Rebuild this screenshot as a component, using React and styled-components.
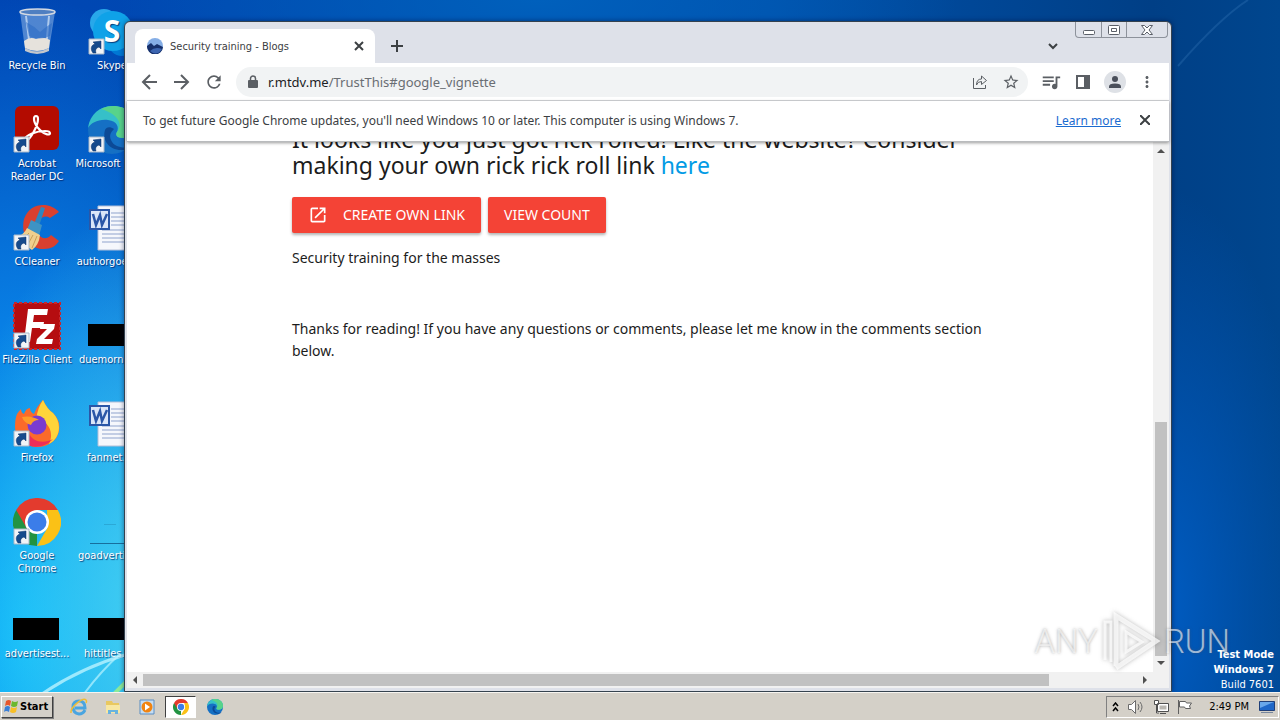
import React from "react";
import styled, { createGlobalStyle } from "styled-components";
import {
  MdStarOutline,
  MdRefresh,
  MdQueueMusic,
  MdMoreVert,
  MdOpenInNew
} from "react-icons/md";

const ui = `"Noto Sans", "Open Sans", sans-serif`;
const small = `"DejaVu Sans Condensed", "DejaVu Sans", sans-serif`;

const GlobalStyle = createGlobalStyle`
  * {
    box-sizing: border-box;
  }

  body {
    margin: 0;
    font-family: ${ui};
    overflow: hidden;
  }

  button {
    margin: 0;
    padding: 0;
    border: 0;
    background: none;
    font: inherit;
    color: inherit;
  }

  svg {
    display: block;
    flex: none;
  }
`;

const Screen = styled.div`
  display: flex;
  flex-direction: column;
  height: 100vh;
`;

const Desktop = styled.main`
  flex: 1;
  min-height: 0;
  position: relative;
  overflow: hidden;

  background: radial-gradient(
      ellipse 240px 420px at 14% 88%,
      rgba(84, 226, 244, 0.9),
      rgba(40, 200, 245, 0) 100%
    ),
    radial-gradient(
      ellipse 330px 640px at 2% 92%,
      #06b4fb 0%,
      rgba(10, 140, 240, 0.8) 50%,
      rgba(0, 80, 200, 0) 100%
    ),
    radial-gradient(
      ellipse 420px 120px at 42% 0%,
      #0060bc,
      rgba(0, 80, 180, 0) 100%
    ),
    radial-gradient(
      ellipse 150px 420px at 91% 88%,
      #005cc2,
      rgba(0, 80, 170, 0) 100%
    ),
    linear-gradient(90deg, #0046b4 0%, #0050aa 60%, #003f86 90%, #00468e 100%);
`;

const Rays = styled.svg`
  position: absolute;
  left: 0;
  bottom: 0;
`;

const CornerRay = styled.svg`
  position: absolute;
  top: 0;
  right: 0;
`;

const IconGrid = styled.div`
  display: grid;
  grid-template-columns: 74px 74px;
  grid-auto-rows: 98px;
  column-gap: 1px;
  padding-top: 8px;
`;

const Shortcut = styled.button`
  display: flex;
  flex-direction: column;
  align-items: center;
  gap: 3px;

  color: #fff;
  font-family: ${small};
  font-size: 11px;
  line-height: 13px;
  text-shadow: 1px 1px 1px rgba(0, 20, 80, 0.7);
  white-space: pre;
`;

const BrowserWindow = styled.section`
  display: flex;
  flex-direction: column;

  position: absolute;
  top: 21px;
  right: 108px;
  bottom: 0;
  left: 124px;

  padding: 0 2px 3px;
  border: 1px solid #35424f;
  border-radius: 6px 6px 0 0;
  background: #dee1e9;
  box-shadow: 0 0 5px rgba(0, 10, 50, 0.5);
`;

const TitleBar = styled.div`
  display: flex;
  align-items: flex-end;
  height: 41px;
  padding-left: 8px;
  color: #3c4043;
`;

const Tab = styled.div`
  display: flex;
  align-items: center;
  gap: 7px;
  width: 240px;
  height: 34px;
  padding: 0 11px 0 12px;

  border-radius: 8px 8px 0 0;
  background: #fff;
  font-family: ${small};
  font-size: 11px;
`;

const Title = styled.span`
  flex: 1;
`;

const NewTab = styled.button`
  height: 34px;
  padding: 0 16px;
`;

const TabSearch = styled.button`
  height: 34px;
  margin: 0 17px 0 auto;
`;

const Caption = styled.div`
  display: flex;
  align-self: flex-start;
  height: 16px;
  margin-right: 1px;
  border: 1px solid #8d929b;
  border-top: 0;
  border-radius: 0 0 4px 4px;
`;

const CaptionButton = styled.button`
  display: flex;
  align-items: center;
  justify-content: center;
  width: ${p => (p.$wide ? 41 : 25)}px;

  & + & {
    border-left: 1px solid #8d929b;
  }
`;

const Toolbar = styled.div`
  display: flex;
  align-items: center;
  gap: 12px;
  height: 38px;
  padding: 0 13px;
  background: #fff;
  border-bottom: 1px solid #d5d7da;
  color: #5b5f64;
`;

const Navigation = styled.nav`
  display: flex;
  gap: 12px;
`;

const AddressBar = styled.div`
  display: flex;
  align-items: center;
  flex: 1;
  gap: 14px;
  height: 30px;
  padding: 0 8px 0 12px;
  border-radius: 15px;
  background: #f1f3f4;
`;

const Address = styled.div`
  display: flex;
  flex: 1;
  margin-left: -4px;
  font-size: 13px;
  color: #6a6e73;
`;

const Host = styled.span`
  color: #202124;
`;

const Avatar = styled.button`
  display: flex;
  align-items: center;
  justify-content: center;
  width: 22px;
  height: 22px;
  border-radius: 11px;
  background: #dee1e6;
  color: #4a4f5a;
`;

const InfoBar = styled.div`
  display: flex;
  align-items: center;
  gap: 19px;
  height: 41px;
  padding: 0 19px 2px 16px;
  background: #fff;
  border-bottom: 1px solid #b9bbbd;
  box-shadow: 0 1px 3px rgba(0, 0, 0, 0.4);
  color: #3c4043;
  font-size: 12px;
  z-index: 1;
`;

const InfoText = styled.span`
  flex: 1;
`;

const InfoLink = styled.a`
  color: #1a6bd0;
`;

const Viewport = styled.div`
  display: grid;
  grid-template-columns: minmax(0, 1fr) 16px;
  grid-template-rows: minmax(0, 1fr) 16px;
  flex: 1;
  min-height: 0;
  background: #f1f1f1;
`;

const Page = styled.article`
  padding: 0 165px;
  overflow: hidden;
  background: #fff;
  color: #1c1c1c;
  font-size: 14px;
  line-height: 22px;
`;

const Heading = styled.h1`
  margin: -16px 0 19px;
  font-size: 23px;
  font-weight: 400;
  line-height: 26px;
`;

const PageLink = styled.a`
  color: #039be5;
  text-decoration: none;
`;

const Actions = styled.div`
  display: flex;
  gap: 7px;
  margin-bottom: 14px;
`;

const ActionButton = styled.button`
  display: flex;
  align-items: center;
  gap: 15px;
  height: 36px;
  padding: 0 16px;
  border-radius: 2px;
  background: #f44336;
  box-shadow: 0 2px 3px rgba(0, 0, 0, 0.3);
  color: #fff;
  font-size: 14px;
`;

const Paragraph = styled.p`
  margin: 0 0 49px;
`;

const Scrollbar = styled.div`
  display: flex;
  flex-direction: ${p => (p.$vertical ? "column" : "row")};
  align-items: center;
  justify-content: space-between;
  padding: ${p => (p.$vertical ? "5px 0" : "0 4px")};
`;

const Thumb = styled.div`
  flex: none;
  width: ${p => (p.$vertical ? "12px" : "89%")};
  height: ${p => (p.$vertical ? "45%" : "12px")};
  margin: ${p => (p.$vertical ? "auto 0 3px" : "0 auto 0 4px")};
  background: #c1c1c1;
`;

const BuildInfo = styled.div`
  position: absolute;
  right: 6px;
  bottom: 0;

  color: #fff;
  font-family: ${small};
  font-size: 11px;
  line-height: 15px;
  text-align: right;
`;

const Watermark = styled.div`
  display: flex;
  align-items: center;
  gap: 3px;

  position: absolute;
  right: 50px;
  bottom: 18px;

  color: rgba(255, 255, 255, 0.6);
  font-family: Roboto, sans-serif;
  font-size: 33px;
  font-weight: 300;
  line-height: 64px;
  text-shadow: 0 0 3px rgba(80, 80, 80, 0.5);

  svg {
    filter: drop-shadow(0 0 2px rgba(80, 80, 80, 0.5));
  }
`;

const Taskbar = styled.footer`
  display: flex;
  align-items: center;
  gap: 3px;
  height: 28px;
  padding: 2px 1px;
  border-top: 1px solid #f6f4f0;
  background: #d4d0c8;
  font-family: ${small};
  font-size: 11px;
`;

const StartButton = styled.button`
  display: flex;
  align-items: center;
  gap: 1px;
  height: 22px;
  width: 52px;
  padding-left: 2px;
  margin-right: 7px;
  border: 1px solid;
  border-color: #fff #404040 #404040 #fff;
  box-shadow: 1px 1px 0 #808080;
  font-weight: 700;
`;

const TaskButton = styled.button`
  display: flex;
  align-items: center;
  justify-content: center;
  width: 31px;
  height: 22px;
  border: ${p => (p.$active ? "1px solid" : "0")};
  border-color: #404040 #fff #fff #404040;
  background: ${p => (p.$active ? "#fff" : "none")};
`;

const Tray = styled.div`
  display: flex;
  align-items: center;
  gap: 8px;
  height: 22px;
  margin-left: auto;
  padding: 0 3px 0 5px;
  border: 1px solid;
  border-color: #808080 #fff #fff #808080;
`;

const Clock = styled.time`
  margin: 0 2px 0 8px;
`;

const Arrow = () => (
  <g>
    <path d="M1 31h15v15H1z" fill="#f2f4f7" stroke="#a9b8c9" />
    <path
      d="M5 45c-3-4-2-8 2-9l-2-2 8-1v8l-2-2c-3 1-4 3-3 6z"
      fill="#164a8c"
      stroke="#0f376e"
      strokeWidth=".5"
    />
  </g>
);

const ChromeShape = () => (
  <g>
    <path d="M24 24v24A24 24 0 0 1 3.200 12z" fill="#229342" />
    <path d="M3.200 12 13.600 30 24 24V12h20.800A24 24 0 0 0 3.200 12z" fill="#e33b2e" />
    <path d="M24 48 34.400 30 34 12h10.800A24 24 0 0 1 24 48z" fill="#fbc116" />
    <circle cx="24" cy="24" r="12" fill="#fff" />
    <circle cx="24" cy="24" r="9.500" fill="#3b7de9" />
  </g>
);

const EdgeShape = () => (
  <g>
    <circle cx="24" cy="24" r="24" fill="#1570c4" />
    <path
      d="M0 22C2 8 12 0 25 0c14 0 23 9 23 20 0 8-6 12-13 12-6 0-8-3-6-6 2-4 1-11-9-12C10 13 3 17 0 22z"
      fill="#36c0c8"
    />
    <path
      d="M25 0c14 0 23 9 23 20 0 8-6 12-13 12-6 0-8-3-6-6 6-7 2-18-16-23 4-2 8-3 12-3z"
      fill="#58d38a"
    />
    <path
      d="M17 24c-3 10 4 21 18 20 4 0 7-2 9-4-6 3-18 2-21-6-2-5 0-8 3-11-4-3-8-2-9 1z"
      fill="#0c4a96"
    />
  </g>
);

const Bin = () => (
  <g>
    <path d="M7 4 12 41q12 6 24 0L42 4z" fill="#8fb6e6" fillOpacity=".55" />
    <path d="M13 8l4 32M36 8l-3 32" stroke="#d8e8fa" strokeOpacity=".7" strokeWidth="2" />
    <path d="M11 33q6-5 12-2 7-3 14 1l-1 8q-12 6-24 0z" fill="#e6e2dc" />
    <path d="M13 14q8 4 14 10 7-6 12-9l-2 13q-11 5-21 0z" fill="#2d6dc4" fillOpacity=".6" />
    <ellipse cx="24.500" cy="4" rx="17.500" ry="3" fill="#4f7fc1" stroke="#d3d9e2" strokeWidth="1.500" />
    <path d="M12 40q12 7 24 0v3q-12 6-24 0z" fill="#c4c7cc" />
  </g>
);

const Skype = () => (
  <g>
    <circle cx="16" cy="15" r="14" fill="#28a8ea" />
    <circle cx="34" cy="34" r="14" fill="#0078d4" />
    <circle cx="25" cy="23" r="20" fill="#0fa2e8" />
    <text
      x="24"
      y="34"
      fill="#fff"
      fontFamily="Open Sans"
      fontSize="30"
      fontWeight="700"
      textAnchor="middle"
    >
      S
    </text>
    <Arrow />
  </g>
);

const Acrobat = () => (
  <g>
    <rect x="2" width="44" height="44" rx="6" fill="#b30b00" />
    <path
      d="M12 33c1-4 11-8 20-8 7 0 6 5 1 3-6-2-12-10-12-15 0-4 4-4 4 0 0 7-8 21-12 22-2 0-2-1-1-2z"
      fill="none"
      stroke="#fff"
      strokeWidth="2.200"
    />
    <Arrow />
  </g>
);

const Edge = () => (
  <g>
    <EdgeShape />
    <Arrow />
  </g>
);

const CCleaner = () => (
  <g>
    <path
      d="M46 8C38-2 17-3 11 15c-4 17 7 31 20 30 7 0 12-3 15-8l-8-6c-5 6-12 3-14-4-2-9 6-18 13-13z"
      fill="#d9402f"
    />
    <path d="M28 3l4 1-6 18-5-2z" fill="#2c87c0" />
    <path d="M18 16l11 5-3 11-12-6z" fill="#3e93c4" />
    <path d="M14 24l13 7q-1 10-8 15L2 34q9-3 12-10z" fill="#f0cf8d" />
    <path d="M16 29L8 37M20 31l-6 11M24 32l-5 12" stroke="#c99f57" />
    <Arrow />
  </g>
);

const FileZilla = () => (
  <g>
    <rect
      x="1"
      y="1"
      width="46"
      height="46"
      fill="#b50d10"
      stroke="#c8252a"
      strokeWidth="2"
      strokeDasharray="3 2"
    />
    <path
      d="M15 7h20l-1 6H21l-1 7h11l-1 6H19l-2 14h-6zM28 22h14l-1 5-10 10h9l-1 5H23l1-5 10-10h-7z"
      fill="#fff"
    />
    <Arrow />
  </g>
);

const Firefox = () => (
  <g>
    <path
      d="M4 14q2-3 4-5 0 4 3 5 2-6 6-6 0 4 4 6 3-8 9-14 4 9 10 13 8 8 6 18c-2 10-11 16-22 16S2 38 2 27q0-8 2-13z"
      fill="#fb6a2a"
    />
    <path d="M30 0q4 9 10 13c9 9 8 25-4 31 6-13-2-24-13-25q2-12 7-19z" fill="#ffd43a" />
    <path d="M3 31c4 17 25 21 37 8-9 5-21 3-24-6z" fill="#ef2d58" />
    <circle cx="24" cy="25" r="9.500" fill="#7a3bd0" />
    <path d="M9 17q9-2 17 3-6 0-8 5-7-2-9-8z" fill="#ff9b26" />
    <Arrow />
  </g>
);

const Chrome = () => (
  <g>
    <ChromeShape />
    <Arrow />
  </g>
);

const Document = () => (
  <g>
    <path d="M10 2h38v44H10z" fill="#f5f7fc" stroke="#b3bfd8" />
    <path
      d="M23 9h22M23 13h22M23 17h22M23 21h22M14 26h31M14 30h31M14 34h31M14 38h31"
      stroke="#8fa3cd"
    />
    <path d="M2 6h19v19H2z" fill="#dbe6f8" stroke="#2b57a7" strokeWidth="2" />
    <path d="M5 10l3 11 4-10 2 10 5-11" fill="none" stroke="#2b57a7" strokeWidth="2.500" />
  </g>
);

const Thumbnail = () => <path d="M0 22h46v22H0z" fill="#000" />;

const FadedFile = () => (
  <g fill="none" stroke="#176f9d">
    <path d="M2 45.500h44" />
    <path d="M16 26.500h12" strokeOpacity=".3" />
  </g>
);

const shortcuts = [
  { label: "Recycle Bin", icon: Bin },
  { label: "Skype", icon: Skype },
  { label: "Acrobat\nReader DC", icon: Acrobat },
  { label: "Microsoft Edge", icon: Edge },
  { label: "CCleaner", icon: CCleaner },
  { label: "authorgoes.rtf", icon: Document },
  { label: "FileZilla Client", icon: FileZilla },
  { label: "duemornin....", icon: Thumbnail },
  { label: "Firefox", icon: Firefox },
  { label: "fanmet.rtf", icon: Document },
  { label: "Google\nChrome", icon: Chrome },
  { label: "goadvertise...", icon: FadedFile },
  { label: "advertisest...", icon: Thumbnail },
  { label: "hittitles.jpg", icon: Thumbnail }
];

const Triangle = ({ points }) => (
  <svg width="8" height="8">
    <polygon points={points} fill="#505050" />
  </svg>
);

const Glyph = ({ width = 12, height = 12, d }) => (
  <svg
    width={width}
    height={height}
    fill="none"
    stroke="currentColor"
    strokeWidth="2"
  >
    <path d={d} />
  </svg>
);

const App = () => (
  <Screen>
    <GlobalStyle />
    <Desktop>
      <Rays width="180" height="90" viewBox="0 0 180 90" fill="none">
        <path d="M42 92Q80 66 128 52" stroke="#b9f3ff" strokeOpacity=".8" strokeWidth="3" />
        <path d="M84 92Q100 70 120 52" stroke="#b9f3ff" strokeOpacity=".7" strokeWidth="2" />
        <path d="M114 92l14-14" stroke="#8bea9a" strokeWidth="4" />
      </Rays>
      <CornerRay width="110" height="80" fill="none">
        <path d="M78 0Q50 18 8 66" stroke="#5b9ad8" strokeOpacity=".2" strokeWidth="2" />
      </CornerRay>
      <IconGrid>
        {shortcuts.map(({ label, icon: Icon }) => (
          <Shortcut key={label}>
            <svg width="48" height="48" viewBox="0 0 48 48">
              <Icon />
            </svg>
            {label}
          </Shortcut>
        ))}
      </IconGrid>

      <BrowserWindow>
        <TitleBar>
          <Tab>
            <svg width="16" height="16" viewBox="0 0 16 16">
              <circle cx="8" cy="8" r="8" fill="#85aee6" />
              <path d="M0 8l4-3 3 3 3-2 6 3A8 8 0 0 1 0 8z" fill="#16306b" />
              <path d="M3 13q5-5 12-2-5 8-12 2z" fill="#3c65b0" />
            </svg>
            <Title>Security training - Blogs</Title>
            <button aria-label="Close tab">
              <Glyph width={10} height={10} d="M1 1l8 8M9 1l-8 8" />
            </button>
          </Tab>
          <NewTab aria-label="New tab">
            <Glyph d="M6 0v12M0 6h12" />
          </NewTab>
          <TabSearch aria-label="Search tabs">
            <Glyph width={10} height={8} d="M1 2l4 4 4-4" />
          </TabSearch>
          <Caption>
            <CaptionButton aria-label="Minimize">
              <svg width="12" height="10" fill="#fff" stroke="#5a5f68">
                <rect x=".5" y="5.500" width="11" height="4" rx="1" />
              </svg>
            </CaptionButton>
            <CaptionButton aria-label="Maximize">
              <svg width="12" height="10" fill="#fff" stroke="#5a5f68">
                <rect x=".5" y=".5" width="11" height="9" rx="1" />
                <path d="M3.500 3.500h5v3h-5z" />
              </svg>
            </CaptionButton>
            <CaptionButton aria-label="Close" $wide>
              <svg width="12" height="10" fill="#fff" stroke="#5a5f68">
                <path d="M.5.5h3L6 3 8.500.5h3L8 5l3.500 4.500h-3L6 7 3.500 9.500h-3L4 5z" />
              </svg>
            </CaptionButton>
          </Caption>
        </TitleBar>

        <Toolbar>
          <Navigation>
            <button aria-label="Back">
              <Glyph width={20} height={20} d="M17 10H4M10 3l-7 7 7 7" />
            </button>
            <button aria-label="Forward">
              <Glyph width={20} height={20} d="M2 10h13M9 3l7 7-7 7" />
            </button>
            <button aria-label="Reload">
              <MdRefresh size={20} />
            </button>
          </Navigation>
          <AddressBar>
            <svg width="10" height="14" fill="currentColor">
              <rect y="5" width="10" height="8" rx="1" />
              <path d="M2.500 6V3.500a2.500 2.500 0 0 1 5 0V6" fill="none" stroke="currentColor" strokeWidth="1.500" />
            </svg>
            <Address>
              <Host>r.mtdv.me</Host>/TrustThis#google_vignette
            </Address>
            <button aria-label="Share">
              <svg width="16" height="16" fill="none" stroke="currentColor">
                <path d="M1.500 4v10.500h12V11" />
                <path d="M4.500 11q0-6 5-6V2l5 4.500-5 4v-3q-4 0-5 3.500z" />
              </svg>
            </button>
            <button aria-label="Bookmark">
              <MdStarOutline size={18} />
            </button>
          </AddressBar>
          <button aria-label="Media">
            <MdQueueMusic size={22} />
          </button>
          <button aria-label="Side panel">
            <svg width="18" height="14">
              <path d="M3 1h12v12H3z" fill="none" stroke="currentColor" strokeWidth="2" />
              <path d="M10 1h5v12h-5z" fill="currentColor" />
            </svg>
          </button>
          <Avatar aria-label="Profile">
            <svg width="12" height="12" fill="currentColor">
              <circle cx="6" cy="3" r="3" />
              <path d="M0 12v-1.500Q0 7.500 6 7.500t6 3V12z" />
            </svg>
          </Avatar>
          <button aria-label="Menu">
            <MdMoreVert size={18} />
          </button>
        </Toolbar>

        <InfoBar>
          <InfoText>
            To get future Google Chrome updates, you'll need Windows 10 or
            later. This computer is using Windows 7.
          </InfoText>
          <InfoLink href="#learn">Learn more</InfoLink>
          <button aria-label="Dismiss">
            <Glyph width={10} height={10} d="M0 0l10 10M10 0L0 10" />
          </button>
        </InfoBar>

        <Viewport>
          <Page>
            <Heading>
              It looks like you just got rick rolled! Like the website? Consider
              making your own rick rick roll link{" "}
              <PageLink href="#here">here</PageLink>
            </Heading>
            <Actions>
              <ActionButton>
                <MdOpenInNew size={20} />
                CREATE OWN LINK
              </ActionButton>
              <ActionButton>VIEW COUNT</ActionButton>
            </Actions>
            <Paragraph>Security training for the masses</Paragraph>
            <Paragraph>
              Thanks for reading! If you have any questions or comments, please
              let me know in the comments section below.
            </Paragraph>
          </Page>
          <Scrollbar $vertical>
            <Triangle points="0,6 4,2 8,6" />
            <Thumb $vertical />
            <Triangle points="0,2 4,6 8,2" />
          </Scrollbar>
          <Scrollbar>
            <Triangle points="6,0 2,4 6,8" />
            <Thumb />
            <Triangle points="2,0 6,4 2,8" />
          </Scrollbar>
        </Viewport>
      </BrowserWindow>

      <BuildInfo>
        <b>Test Mode</b>
        <br />
        <b>Windows 7</b>
        <br />
        Build 7601
      </BuildInfo>
      <Watermark>
        ANY
        <svg width="60" height="64" viewBox="0 0 60 64" fill="none" stroke="#fff" strokeOpacity=".75">
          <path d="M4 50V12h6v40" strokeWidth="3" />
          <path d="M15 56V6l40 25-40 27" strokeWidth="5" />
          <path d="M25 42V22l16 10z" strokeWidth="3" />
        </svg>
        RUN
      </Watermark>
    </Desktop>

    <Taskbar>
      <StartButton>
        <svg width="15" height="15" viewBox="0 0 15 15">
          <path d="M2 2q3-2 5 0L6 7Q4 5 1 7z" fill="#e8562a" />
          <path d="M8 2q3 2 6 0l-1 5q-3 2-6 0z" fill="#6cb82f" />
          <path d="M1 8q3-2 5 0l-1 5q-3-2-5 0z" fill="#3a7fd6" />
          <path d="M7 8q3 2 6 0l-1 5q-3 2-6 0z" fill="#f8bf26" />
        </svg>
        Start
      </StartButton>
      <TaskButton aria-label="Internet Explorer">
        <svg width="18" height="18" viewBox="0 0 18 18" fill="none">
          <path d="M15 12q-2 4-6 4-6-1-6-7t6-6 6 7H5" stroke="#4aa5e0" strokeWidth="3" />
          <path d="M1 15C0 9 13-1 16 2q1 1 0 3" stroke="#efbd37" strokeWidth="1.500" />
        </svg>
      </TaskButton>
      <TaskButton aria-label="Explorer">
        <svg width="16" height="16" viewBox="0 0 16 16">
          <path d="M1 2h6l1 2h6v10H1z" fill="#e9c860" />
          <path d="M1 6h14v8H1z" fill="#f8e7a2" />
          <path d="M3 15v-4h10v4h-3v-2H6v2z" fill="#69b3df" />
        </svg>
      </TaskButton>
      <TaskButton aria-label="Media Player">
        <svg width="16" height="16" viewBox="0 0 16 16">
          <path d="M1 1h14v14H1z" fill="#c5ddf3" stroke="#5a8ec3" />
          <circle cx="8" cy="8" r="5.500" fill="#f18411" />
          <path d="M6 4.500 11 8l-5 3.500z" fill="#fff" />
        </svg>
      </TaskButton>
      <TaskButton aria-label="Chrome" $active>
        <svg width="16" height="16" viewBox="0 0 48 48">
          <ChromeShape />
        </svg>
      </TaskButton>
      <TaskButton aria-label="Edge">
        <svg width="16" height="16" viewBox="0 0 48 48">
          <EdgeShape />
        </svg>
      </TaskButton>
      <Tray>
        <svg width="7" height="10" fill="none" stroke="#000" strokeWidth="1.500">
          <path d="M1 4l2.500-3L6 4M1 9l2.500-3L6 9" />
        </svg>
        <svg width="18" height="16" fill="none" stroke="#6b6b6b">
          <path d="M1.500 5.500h3l4-4v13l-4-4h-3z" fill="#fff" />
          <path d="M11 5q2 3 0 6M13 3q4 5 0 10" />
        </svg>
        <svg width="16" height="16" fill="#fff" stroke="#505050">
          <path d="M4.500 4.500h11v8h-11zM7 14.500h6M1.500 1.500h4v4h-4zM3.500 6v8H6" />
          <path d="M6.500 6.500h7v4h-7z" fill="#b9b6b0" stroke="none" />
        </svg>
        <svg width="16" height="16" fill="#fff" stroke="#606060">
          <path d="M1.500 1v14M2.500 2.500h6l1 1.500h5l-2 3 1 2.500h-5l-1-1.500h-5z" />
        </svg>
        <Clock>2:49 PM</Clock>
        <svg width="16" height="14">
          <path d="M.5 1.500h15v9H.5z" fill="#1f67c8" stroke="#203f78" />
          <path d="M1 2h14L1 8z" fill="#69a7ea" />
          <path d="M2 12h12v1H2z" fill="#77869c" />
        </svg>
      </Tray>
    </Taskbar>
  </Screen>
);

export default App;
